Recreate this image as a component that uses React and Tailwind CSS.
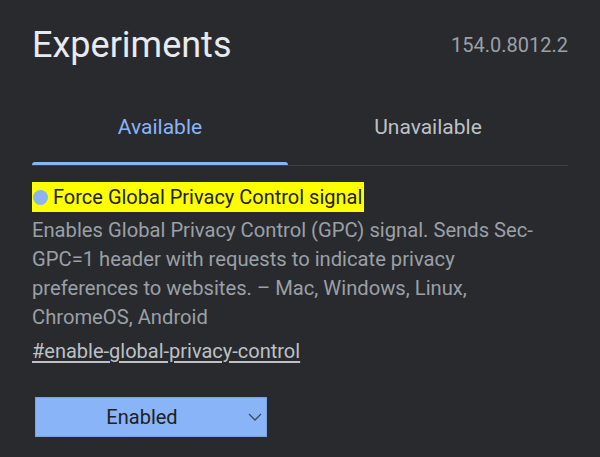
export default function App() {
  return (
    <div className="w-[600px] h-[457px] overflow-hidden bg-[#292a2d] px-[32px] font-['Roboto',sans-serif]">
      <div className="flex items-start justify-between pt-[21px]">
        <h1 className="text-[36px] leading-[48px] text-[#e8eaed]">Experiments</h1>
        <div className="mt-[10px] text-[20px] leading-[28px] text-[#9aa0a6]">154.0.8012.2</div>
      </div>
      <div className="mt-[43px] flex border-b border-[#3c4043]">
        <div className="flex w-[256px] flex-col items-center">
          <div className="text-[21px] leading-[30px] text-[#8ab4f8]">Available</div>
          <div className="mt-[20px] h-[3px] w-full rounded-t-[3px] bg-[#8ab4f8]"></div>
        </div>
        <div className="flex flex-1 flex-col items-center">
          <div className="text-[21px] leading-[30px] text-[#bdc1c6]">Unavailable</div>
          <div className="mt-[20px] h-[3px] w-full"></div>
        </div>
      </div>
      <div className="mt-[16px]">
        <div className="inline-flex h-[30px] items-center bg-[#ffff00] pr-[2px]">
          <span className="ml-[1px] h-[15px] w-[15px] rounded-full bg-[#8ab4f8]"></span>
          <span className="ml-[5px] text-[20px] leading-[30px] text-[#202124]">Force Global Privacy Control signal</span>
        </div>
        <p className="mt-[4px] max-w-[512px] text-[20.2px] leading-[29px] text-[#9aa0a6]">
          Enables Global Privacy Control (GPC) signal. Sends Sec-GPC=1 header with requests to indicate privacy preferences to websites. – Mac, Windows, Linux, ChromeOS, Android
        </p>
        <a className="mt-[5px] inline-block text-[20px] leading-[29px] text-[#bdc1c6] underline underline-offset-[3px]">#enable-global-privacy-control</a>
      </div>
      <div className="ml-[3px] mt-[31px] flex h-[40px] w-[232px] items-center border border-[#7ca2e0] bg-[#8ab4f8] text-[#202124]">
        <span className="flex-1 text-center text-[20px]">Enabled</span>
        <svg className="mr-[4px]" width="14" height="8" viewBox="0 0 14 8" fill="none">
          <path d="M1 1 L7 7 L13 1" stroke="#3c4a66" strokeWidth="1.3" />
        </svg>
      </div>
    </div>
  );
}
